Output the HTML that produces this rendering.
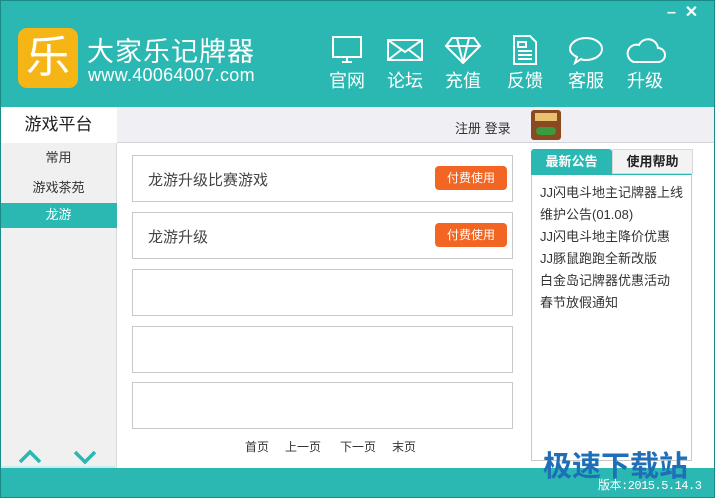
<!DOCTYPE html>
<html><head><meta charset="utf-8"><style>
*{margin:0;padding:0;box-sizing:border-box}
body{width:715px;height:498px;position:relative;overflow:hidden;background:#fff;font-family:"Liberation Sans","Noto Sans CJK SC",sans-serif;color:#333}
.abs{position:absolute}
.hdr{left:0;top:0;width:715px;height:107px;background:#2bb8b2}
.nav{color:#fff;font-size:18px;text-align:center;width:46px}
.nav svg{display:block;margin:0 auto 2px}
.side{left:0;top:107px;width:117px;height:361px;background:#f0f0f0;border-right:1px solid #d8d8d8}
.card{left:132px;width:381px;height:47px;border:1px solid #c8c8c8;background:#fff;font-size:15px;color:#444;padding:13px 0 0 15px}
.btn{position:absolute;right:5px;top:10px;width:72px;height:24px;background:#f26522;border-radius:4px;color:#fff;font-size:12px;text-align:center;line-height:24px}
.news{font-size:13px;color:#333;line-height:22px}
</style></head><body>
<div class="abs hdr"></div>
<div class="abs" style="left:18px;top:28px;width:60px;height:60px;background:#f4b515;border-radius:9px;color:#fff;font-size:44px;text-align:center;line-height:60px">乐</div>
<div class="abs" style="left:87px;top:30px;color:#fff;font-size:27px;letter-spacing:1px">大家乐记牌器</div>
<div class="abs" style="left:88px;top:65px;color:#fff;font-size:18px;letter-spacing:0.3px">www.40064007.com</div>
<div class="abs" style="left:667px;top:2px;color:#fff;font-size:16px;font-weight:bold">–&nbsp;&nbsp;✕</div>
<div class="abs nav" style="left:324px;top:35px"><svg width="34" height="30" viewBox="0 0 34 30" fill="none" stroke="#fff" stroke-width="2"><rect x="3" y="2" width="28" height="20"/><path d="M12 27h10M17 22v5"/></svg>官网</div>
<div class="abs nav" style="left:382px;top:35px"><svg width="38" height="30" viewBox="0 0 38 30" fill="none" stroke="#fff" stroke-width="2"><rect x="2" y="5" width="34" height="20"/><path d="M2 5l17 12 17-12M2 25l13-10M36 25l-13-10"/></svg>论坛</div>
<div class="abs nav" style="left:440px;top:35px"><svg width="38" height="30" viewBox="0 0 38 30" fill="none" stroke="#fff" stroke-width="2"><path d="M8 3h22l6 8-17 17L2 11z M2 11h34 M13 3l6 25 6-25"/></svg>充值</div>
<div class="abs nav" style="left:502px;top:35px"><svg width="34" height="30" viewBox="0 0 34 30" fill="none" stroke="#fff" stroke-width="2"><path d="M6 1h16l6 6v22H6z M10 7h8v5h-8z M10 16h14M10 20h14M10 24h14"/></svg>反馈</div>
<div class="abs nav" style="left:563px;top:35px"><svg width="38" height="30" viewBox="0 0 38 30" fill="none" stroke="#fff" stroke-width="2"><path d="M19 3c9 0 16 5 16 11s-7 11-16 11c-2 0-4 0-5-1l-6 4 2-6c-4-2-7-5-7-8 0-6 7-11 16-11z"/></svg>客服</div>
<div class="abs nav" style="left:622px;top:35px"><svg width="42" height="30" viewBox="0 0 42 30" fill="none" stroke="#fff" stroke-width="2"><path d="M10 27h24a7 7 0 0 0 0-14 10 10 0 0 0-19-3 8 8 0 0 0-5 17z"/></svg>升级</div>
<div class="abs" style="left:117px;top:107px;width:598px;height:36px;background:#efeff4;border-bottom:1px solid #d4d4dc"></div>
<div class="abs" style="left:455px;top:118px;font-size:13px">注册 登录</div>
<div class="abs" style="left:531px;top:110px;width:30px;height:30px;background:#8a4a20;border-radius:3px"><div style="margin:3px 4px;height:8px;background:#e8c070"></div><div style="margin:6px 5px;height:8px;background:#3a9a40;border-radius:4px"></div></div>
<div class="abs side"></div>
<div class="abs" style="left:0;top:107px;width:117px;height:36px;background:#fff;font-size:17px;text-align:center;line-height:36px;color:#222">游戏平台</div>
<div class="abs" style="left:0;top:147px;width:117px;text-align:center;font-size:13px">常用</div>
<div class="abs" style="left:0;top:177px;width:117px;text-align:center;font-size:13px">游戏茶苑</div>
<div class="abs" style="left:0;top:203px;width:117px;height:25px;background:#2bb8b2;text-align:center;font-size:13px;color:#fff;line-height:24px">龙游</div>
<svg class="abs" style="left:17px;top:446px" width="90" height="20" fill="none" stroke="#2bb8b2" stroke-width="3.5"><path d="M3 16l10-10 10 10M58 6l10 10 10-10"/></svg>
<div class="abs card" style="top:155px">龙游升级比赛游戏<div class="btn">付费使用</div></div>
<div class="abs card" style="top:212px">龙游升级<div class="btn">付费使用</div></div>
<div class="abs card" style="top:269px"></div>
<div class="abs card" style="top:326px"></div>
<div class="abs card" style="top:382px"></div>
<div class="abs" style="left:245px;top:438px;font-size:12px;color:#333">首页</div>
<div class="abs" style="left:285px;top:438px;font-size:12px;color:#333">上一页</div>
<div class="abs" style="left:340px;top:438px;font-size:12px;color:#333">下一页</div>
<div class="abs" style="left:392px;top:438px;font-size:12px;color:#333">末页</div>
<div class="abs" style="left:531px;top:174px;width:161px;height:287px;border:1px solid #c8c8c8;border-top:1px solid #2bb8b2"></div>
<div class="abs" style="left:531px;top:149px;width:81px;height:26px;background:#2bb8b2;color:#fff;font-size:13px;font-weight:bold;text-align:center;line-height:26px;border-radius:3px 3px 0 0">最新公告</div>
<div class="abs" style="left:612px;top:149px;width:81px;height:25px;background:#f3f3f3;border:1px solid #d8d8d8;color:#222;font-size:13px;font-weight:bold;text-align:center;line-height:24px">使用帮助</div>
<div class="abs news" style="left:540px;top:182px">JJ闪电斗地主记牌器上线<br>维护公告(01.08)<br>JJ闪电斗地主降价优惠<br>JJ豚鼠跑跑全新改版<br>白金岛记牌器优惠活动<br>春节放假通知</div>
<div class="abs" style="left:0;top:468px;width:715px;height:30px;background:#2bb8b2"></div>
<div class="abs" style="left:0;top:466px;width:117px;height:2px;background:#c8eeec"></div>
<div class="abs" style="left:543px;top:443px;font-size:29px;font-weight:bold;color:#1e6fb8">极速下载站</div>
<div class="abs" style="left:598px;top:476px;font-size:12px;color:#fff;font-family:'Liberation Mono','Noto Sans CJK SC',monospace;letter-spacing:-0.5px">版本:2015.5.14.3</div>
<div class="abs" style="left:0;top:0;width:715px;height:498px;border:1px solid #1a8a86;pointer-events:none"></div>
</body></html>
